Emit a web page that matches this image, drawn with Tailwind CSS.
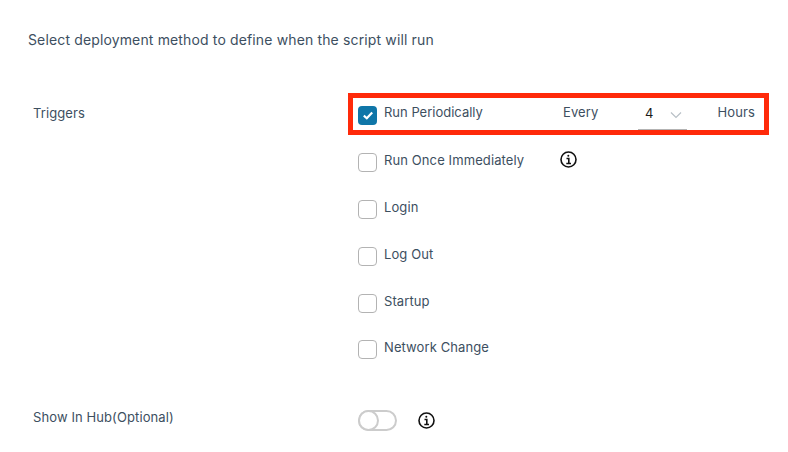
<!DOCTYPE html>
<html lang="en">
<head>
    <meta charset="UTF-8">
    <title>Deployment Triggers</title>
    <script src="https://cdn.jsdelivr.net/npm/@tailwindcss/browser@4"></script>
</head>
<body class="bg-white font-['Inter',sans-serif] text-[13px] tracking-[0.1px] text-[#3d4f5f] w-[788px] h-[452px] overflow-hidden">
    <!-- Heading -->
    <p class="pl-[28px] pt-[31px] h-[93px] leading-[18px] text-[14px] tracking-[0.14px]">Select deployment method to define when the script will run</p>

    <div class="flex">
        <div class="w-[348px] pl-[33px] pt-[11px] leading-[18px]">Triggers</div>

        <div class="w-[421px]">
            <!-- Highlighted row -->
            <div class="h-[42px] border-[5px] border-[#ff2a0a] flex items-center pl-[5px] pr-[9px]">
                <span class="w-[19px] h-[19px] rounded-[4px] bg-[#0f76a8] flex items-center justify-center mt-[3px]">
                    <svg class="w-[12px] h-[12px]" viewBox="0 0 12 12" fill="none" stroke="white" stroke-width="2.2"><path d="M1.8 5.7 L4.8 8.3 L10.2 2.5"/></svg>
                </span>
                <span class="ml-[7px] w-[179px] mb-[3px] tracking-normal">Run Periodically</span>
                <span class="w-[75px] mb-[3px]">Every</span>
                <div class="w-[49px] h-[28px] self-end border-b border-[#b3b3b3] flex items-center pl-[7px] pr-[5px] pb-[3px] justify-between">
                    <span class="text-[#1a1a1a]">4</span>
                    <svg class="w-[12px] h-[8px] mt-[2px]" viewBox="0 0 12 8" fill="none" stroke="#b8c0c6" stroke-width="1.2"><path d="M1 1.5 L6 6.5 L11 1.5"/></svg>
                </div>
                <span class="ml-auto mb-[3px]">Hours</span>
            </div>

            <!-- Other triggers -->
            <div class="pl-[10px] pt-[18px] flex flex-col gap-[28px]">
                <div class="flex h-[19px]">
                    <span class="w-[19px] h-[19px] rounded-[4px] border border-[#b3b3b3] bg-white"></span>
                    <span class="ml-[7px] w-[176px] mt-[-2px] leading-[18px]">Run Once Immediately</span>
                    <svg class="w-[17px] h-[17px] mt-[-2px]" viewBox="0 0 17 17" fill="none" stroke="#111" stroke-width="1.6"><circle cx="8.5" cy="8.5" r="7.5"/><path d="M6.5 7.5 H8.8 V12.5 M6.3 12.5 H11"/><circle cx="8.3" cy="4.8" r="1" fill="#111" stroke="none"/></svg>
                </div>
                <div class="flex h-[19px]">
                    <span class="w-[19px] h-[19px] rounded-[4px] border border-[#b3b3b3] bg-white"></span>
                    <span class="ml-[7px] mt-[-2px] leading-[18px]">Login</span>
                </div>
                <div class="flex h-[19px]">
                    <span class="w-[19px] h-[19px] rounded-[4px] border border-[#b3b3b3] bg-white"></span>
                    <span class="ml-[7px] mt-[-2px] leading-[18px]">Log Out</span>
                </div>
                <div class="flex h-[19px]">
                    <span class="w-[19px] h-[19px] rounded-[4px] border border-[#b3b3b3] bg-white"></span>
                    <span class="ml-[7px] mt-[-2px] leading-[18px]">Startup</span>
                </div>
                <div class="flex h-[19px] mt-[-1px]">
                    <span class="w-[19px] h-[19px] rounded-[4px] border border-[#b3b3b3] bg-white"></span>
                    <span class="ml-[7px] mt-[-2px] leading-[18px]">Network Change</span>
                </div>
            </div>
        </div>
    </div>

    <!-- Show in hub -->
    <div class="flex mt-[49px]">
        <div class="w-[358px] pl-[33px] leading-[18px]">Show In Hub(Optional)</div>
        <div class="flex items-center gap-[22px] h-[21px] mt-[2px]">
            <span class="w-[39px] h-[21px] rounded-full border-2 border-[#cccccc] bg-white flex items-center">
                <span class="w-[21px] h-[21px] shrink-0 rounded-full bg-white border-2 border-[#cccccc] ml-[-2px]"></span>
            </span>
            <svg class="w-[17px] h-[17px] ml-[-1px]" viewBox="0 0 17 17" fill="none" stroke="#111" stroke-width="1.6"><circle cx="8.5" cy="8.5" r="7.5"/><path d="M6.5 7.5 H8.8 V12.5 M6.3 12.5 H11"/><circle cx="8.3" cy="4.8" r="1" fill="#111" stroke="none"/></svg>
        </div>
    </div>
</body>
</html>
